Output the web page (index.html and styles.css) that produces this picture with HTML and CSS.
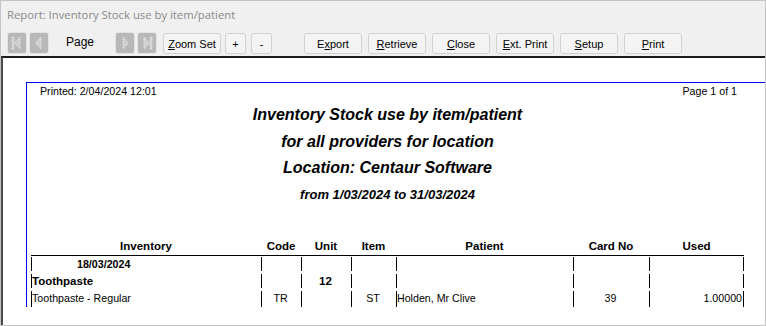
FILE: index.html
```html
<!DOCTYPE html>
<html lang="en">
<head>
    <meta charset="UTF-8">
    <title>Report: Inventory Stock use by item/patient</title>
    <link rel="stylesheet" href="styles.css">
</head>
<body>
    <div class="window">
        <div class="titlebar">Report: Inventory Stock use by item/patient</div>

        <div class="toolbar">
            <span class="nav-btn">
                <svg width="18" height="20" viewBox="0 0 18 20">
                    <rect x="4" y="4" width="2" height="12" class="nav-ico"/>
                    <polygon points="12,4 12,16 6.5,10" class="nav-ico"/>
                </svg>
            </span>
            <span class="nav-btn">
                <svg width="18" height="20" viewBox="0 0 18 20">
                    <polygon points="11,4 11,16 5.5,10" class="nav-ico"/>
                </svg>
            </span>
            <span class="page-label">Page</span>
            <span class="nav-btn">
                <svg width="18" height="20" viewBox="0 0 18 20">
                    <polygon points="7,4 7,16 12.5,10" class="nav-ico"/>
                </svg>
            </span>
            <span class="nav-btn nav-last">
                <svg width="18" height="20" viewBox="0 0 18 20">
                    <polygon points="6,4 6,16 11.5,10" class="nav-ico"/>
                    <rect x="12" y="4" width="2" height="12" class="nav-ico"/>
                </svg>
            </span>
            <button class="btn btn-zoom"><u>Z</u>oom Set</button>
            <button class="btn btn-small">+</button>
            <button class="btn btn-small btn-minus">-</button>

            <div class="actions">
                <button class="btn">E<u>x</u>port</button>
                <button class="btn"><u>R</u>etrieve</button>
                <button class="btn"><u>C</u>lose</button>
                <button class="btn"><u>E</u>xt. Print</button>
                <button class="btn"><u>S</u>etup</button>
                <button class="btn"><u>P</u>rint</button>
            </div>
        </div>

        <div class="viewport">
            <div class="page">
                <div class="page-head">
                    <span>Printed: 2/04/2024 12:01</span>
                    <span>Page 1 of 1</span>
                </div>

                <div class="titles">
                    <div class="title">Inventory Stock use by item/patient</div>
                    <div class="title">for all providers for location</div>
                    <div class="title">Location: Centaur Software</div>
                    <div class="title title-small">from 1/03/2024 to 31/03/2024</div>
                </div>

                <table class="report">
                    <colgroup>
                        <col style="width:230px">
                        <col style="width:40px">
                        <col style="width:50px">
                        <col style="width:45px">
                        <col style="width:177px">
                        <col style="width:76px">
                        <col style="width:95px">
                    </colgroup>
                    <thead>
                        <tr>
                            <th>Inventory</th>
                            <th>Code</th>
                            <th>Unit</th>
                            <th>Item</th>
                            <th>Patient</th>
                            <th>Card No</th>
                            <th>Used</th>
                        </tr>
                    </thead>
                    <tbody>
                        <tr class="row-date">
                            <td class="date">18/03/2024</td>
                            <td></td>
                            <td></td>
                            <td></td>
                            <td></td>
                            <td></td>
                            <td class="last"></td>
                        </tr>
                        <tr class="row-group">
                            <td class="group">Toothpaste</td>
                            <td></td>
                            <td class="center bold">12</td>
                            <td></td>
                            <td></td>
                            <td></td>
                            <td class="last"></td>
                        </tr>
                        <tr class="row-item">
                            <td>Toothpaste - Regular</td>
                            <td class="center">TR</td>
                            <td></td>
                            <td class="center">ST</td>
                            <td>Holden, Mr Clive</td>
                            <td class="center">39</td>
                            <td class="last right">1.00000</td>
                        </tr>
                    </tbody>
                </table>
            </div>
        </div>
    </div>
</body>
</html>
```

FILE: styles.css
```css
/* Report preview window */
body {
    margin: 0;
    background: #ffffff;
}

.window {
    box-sizing: border-box;
    width: 766px;
    height: 326px;
    border: 1px solid #c4c4c4;
    background-color: #f0f0f0;
    display: flex;
    flex-direction: column;
    overflow: hidden;
}

.titlebar {
    height: 27px;
    line-height: 27px;
    padding-left: 6px;
    font-family: "Open Sans", "Noto Sans", sans-serif;
    font-size: 11.3px;
    color: #8a8a8a;
}

/* toolbar */
.toolbar {
    height: 28px;
    box-sizing: border-box;
    padding: 5px 0 0 7px;
    display: flex;
    align-items: flex-start;
    font-family: "Liberation Sans", Arial, sans-serif;
}

.nav-btn {
    width: 18px;
    height: 20px;
    margin-right: 4px;
    background-color: #b8b8b8;
    border-radius: 2px;
    box-shadow: 0 0 0 1px #e4e4e4;
}

.nav-btn svg {
    display: block;
}

.nav-ico {
    fill: #cfcfcf;
    stroke: #f4f4f4;
    stroke-width: 0.8;
    stroke-dasharray: 1 1;
}

.nav-last {
    margin-right: 7px;
}

.page-label {
    width: 46px;
    margin: 0 4px 0 14px;
    font-size: 12px;
    line-height: 19px;
    color: #000;
}

.btn {
    width: 58px;
    height: 21px;
    padding: 0;
    margin: 0 6px 0 0;
    font-family: "Liberation Sans", Arial, sans-serif;
    font-size: 11px;
    color: #000;
    background-color: #f4f4f4;
    border: 1px solid #d2d2d2;
    border-radius: 3px;
}

.btn-zoom {
    margin-right: 4px;
}

.btn-small {
    width: 21px;
    margin-right: 5px;
}

.btn-minus {
    margin-right: 32px;
}

.actions {
    display: flex;
}

/* report area */
.viewport {
    flex: 1;
    background-color: #ffffff;
    border-top: 2px solid #1c1c1c;
    border-left: 2px solid #4a4a4a;
    overflow: hidden;
}

.page {
    width: 760px;
    margin: 24px 0 0 23px;
    padding-left: 4px;
    border-top: 1px solid #0000ff;
    border-left: 1px solid #0000ff;
    font-family: "Liberation Sans", Arial, sans-serif;
    color: #000;
}

.page-head {
    width: 713px;
    box-sizing: border-box;
    display: flex;
    justify-content: space-between;
    padding: 1px 7px 0 9px;
    font-size: 10.67px;
    line-height: 14px;
}

.titles {
    width: 713px;
    margin-top: 4px;
    text-align: center;
}

.title {
    font-size: 16px;
    font-weight: bold;
    font-style: italic;
    line-height: 26.7px;
}

.title-small {
    font-size: 13px;
}

/* table */
.report {
    width: 713px;
    margin-top: 29px;
    table-layout: fixed;
    border-collapse: collapse;
    font-size: 10.67px;
}

.report th {
    height: 17px;
    padding: 0;
    font-size: 11.5px;
    font-weight: bold;
    text-align: center;
    border-bottom: 1px solid #000;
}

.report td {
    height: 17px;
    padding: 0 2px 0 1px;
    white-space: nowrap;
    background: linear-gradient(#000, #000) 0 1px / 1px 14px no-repeat;
}

.report td.last {
    background:
        linear-gradient(#000, #000) 0 1px / 1px 14px no-repeat,
        linear-gradient(#000, #000) 100% 1px / 1px 14px no-repeat;
}

.report .row-item td {
    background-size: 1px 16px;
}

.report .row-item td.last {
    background-size: 1px 16px, 1px 16px;
}

.report td.date {
    padding-left: 46px;
    font-weight: bold;
}

.report td.group {
    font-size: 11.5px;
    font-weight: bold;
}

.center {
    text-align: center;
}

.right {
    text-align: right;
}

.bold {
    font-weight: bold;
    font-size: 11.5px;
}
```
